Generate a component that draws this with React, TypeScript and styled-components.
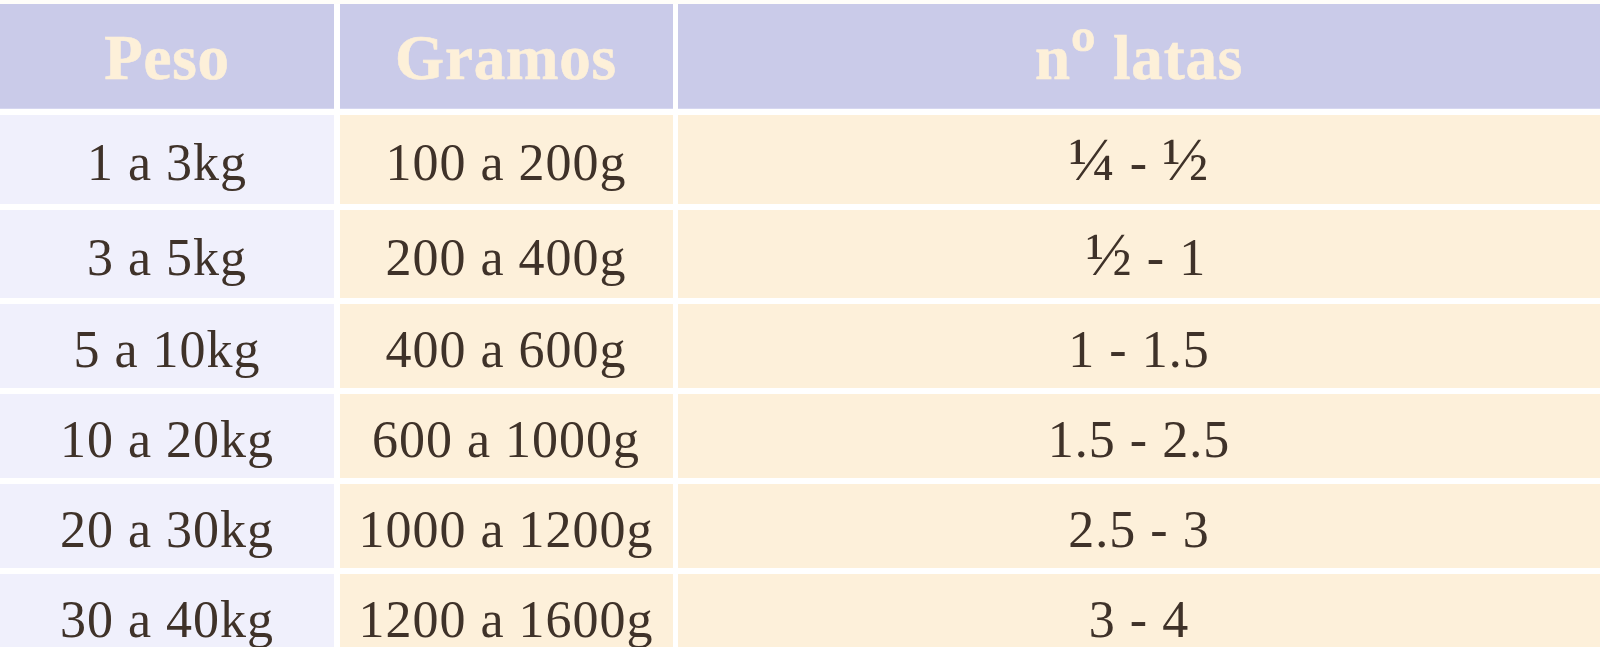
import React from "react";
import styled, { createGlobalStyle } from "styled-components";

const Global = createGlobalStyle`
  html, body { margin: 0; padding: 0; background: #ffffff; }
  body { font-family: "Liberation Serif", "DejaVu Serif", serif; overflow: hidden; }
`;

const Page = styled.div`
  width: 1600px;
  height: 647px;
  padding-top: 4px;
  box-sizing: border-box;
  background: #fffefa;
  overflow: hidden;
`;

const Table = styled.div`
  display: grid;
  grid-template-columns: 334px 333px 1fr;
  grid-template-rows: 105px 89px 88px repeat(4, 84px);
  column-gap: 5.5px;
  row-gap: 6px;
  background: #ffffff;
`;

const HeadCell = styled.div`
  background: #cacbe9;
  box-shadow: inset 0 -1px 0 #d6d7f0;
  display: flex;
  align-items: center;
  justify-content: center;
  padding-top: 4px;
  box-sizing: border-box;
  font-family: "Liberation Serif", "DejaVu Serif", serif;
  font-weight: 700;
  font-size: 63px;
  color: #fdf0d9;
  letter-spacing: 0.8px;
  -webkit-text-stroke: 0.6px #fdf0d9;
  white-space: pre;
`;

const HeadLabel = styled.span`
  white-space: pre;
`;

const Ordinal = styled.span`
  font-size: 1.2em;
  line-height: 0;
`;

const Cell = styled.div<{ $tone: "lavender" | "cream" }>`
  background: ${(p) => (p.$tone === "lavender" ? "#f0f0fc" : "#fdf0da")};
  display: flex;
  align-items: center;
  justify-content: center;
  padding-top: 6px;
  box-sizing: border-box;
  font-family: "Liberation Serif", "DejaVu Serif", serif;
  font-size: 52px;
  color: #3f3229;
  letter-spacing: 1px;
  white-space: pre;
`;

const CellText = styled.span`
  white-space: pre;
`;

const Frac = styled.span`
  font-size: 1.18em;
  line-height: 0;
`;

const rows: [string, string, React.ReactNode][] = [
  ["1 a 3kg", "100 a 200g", <><Frac>¼</Frac> - <Frac>½</Frac></>],
  ["3 a 5kg", "200 a 400g", <>{"\u00a0"}<Frac>½</Frac> - 1</>],
  ["5 a 10kg", "400 a 600g", "1 - 1.5"],
  ["10 a 20kg", "600 a 1000g", "1.5 - 2.5"],
  ["20 a 30kg", "1000 a 1200g", "2.5 - 3"],
  ["30 a 40kg", "1200 a 1600g", "3 - 4"],
];

export default function App() {
  return (
    <>
      <Global />
      <Page>
        <Table>
          <HeadCell><HeadLabel>Peso</HeadLabel></HeadCell>
          <HeadCell><HeadLabel>Gramos</HeadLabel></HeadCell>
          <HeadCell>
            <HeadLabel>n<Ordinal>º</Ordinal> latas</HeadLabel>
          </HeadCell>
          {rows.map((r, i) => (
            <React.Fragment key={i}>
              <Cell $tone="lavender"><CellText>{r[0]}</CellText></Cell>
              <Cell $tone="cream"><CellText>{r[1]}</CellText></Cell>
              <Cell $tone="cream"><CellText>{r[2]}</CellText></Cell>
            </React.Fragment>
          ))}
        </Table>
      </Page>
    </>
  );
}
